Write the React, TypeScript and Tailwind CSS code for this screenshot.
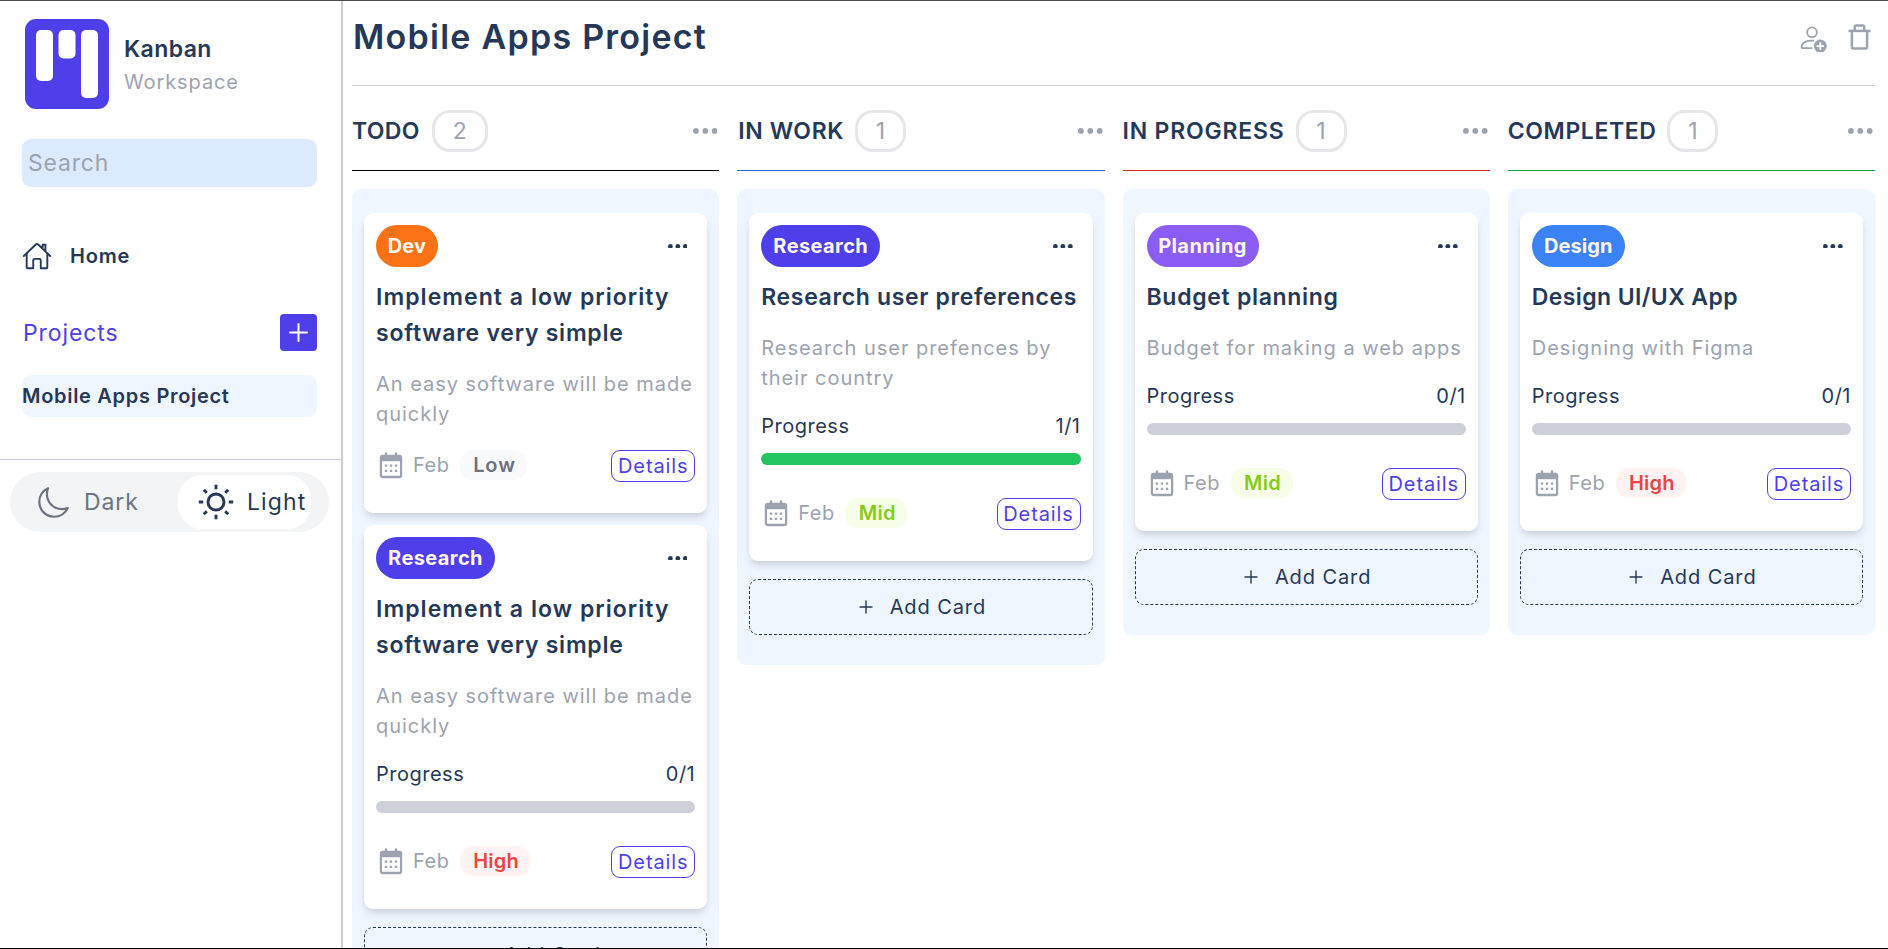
import type { ReactNode } from 'react';
import { IoHomeOutline, IoMoonOutline } from 'react-icons/io5';

type Card = {
  tag: string;
  tagClass: string;
  title: ReactNode;
  titleClass?: string;
  desc: string;
  progress?: string;
  done?: boolean;
  priority: 'Low' | 'Mid' | 'High';
};

type Column = {
  name: string;
  nameClass: string;
  lineClass: string;
  count: number;
  cards: Card[];
};

const dev = 'w-[62px] bg-[#f97316] tracking-[0.2px]';
const research = 'w-[119px] bg-[#4e3feb] tracking-[0.4px]';
const planning = 'w-[112px] bg-[#8b5cf6] tracking-[0.4px]';
const design = 'w-[93px] bg-[#3b82f6] tracking-[0.1px]';

const priorityClass = {
  Low: 'w-[67px] bg-[#f9fafb] text-[#6b7280] tracking-[0.9px]',
  Mid: 'w-[62px] bg-[#f7fee7] text-[#84cc16] tracking-[0.3px]',
  High: 'w-[70px] bg-[#fef2f2] text-[#ef4444] tracking-[0.2px]',
};

const implementTitle = (
  <>
    <span className="tracking-[1.05px]">Implement a low priority</span>{' '}
    <span className="tracking-[0.75px]">software very simple</span>
  </>
);

const columns: Column[] = [
  {
    name: 'TODO',
    nameClass: 'pl-0 pr-px tracking-[0.3px]',
    lineClass: 'border-black',
    count: 2,
    cards: [
      {
        tag: 'Dev',
        tagClass: dev,
        title: implementTitle,
        desc: 'An easy software will be made quickly',
        priority: 'Low',
      },
      {
        tag: 'Research',
        tagClass: research,
        title: implementTitle,
        desc: 'An easy software will be made quickly',
        progress: '0/1',
        priority: 'High',
      },
    ],
  },
  {
    name: 'IN WORK',
    nameClass: 'pl-px tracking-[0.6px]',
    lineClass: 'border-[#2563eb]',
    count: 1,
    cards: [
      {
        tag: 'Research',
        tagClass: research,
        title: 'Research user preferences',
        titleClass: 'tracking-[0.65px]',
        desc: 'Research user prefences by their country',
        progress: '1/1',
        done: true,
        priority: 'Mid',
      },
    ],
  },
  {
    name: 'IN PROGRESS',
    nameClass: 'tracking-[0.8px]',
    lineClass: 'border-[#dc2626]',
    count: 1,
    cards: [
      {
        tag: 'Planning',
        tagClass: planning,
        title: 'Budget planning',
        titleClass: 'tracking-[0.7px]',
        desc: 'Budget for making a web apps',
        progress: '0/1',
        priority: 'Mid',
      },
    ],
  },
  {
    name: 'COMPLETED',
    nameClass: 'tracking-[0.6px]',
    lineClass: 'border-[#16a34a]',
    count: 1,
    cards: [
      {
        tag: 'Design',
        tagClass: design,
        title: 'Design UI/UX App',
        titleClass: 'tracking-[0.4px]',
        desc: 'Designing with Figma',
        progress: '0/1',
        priority: 'High',
      },
    ],
  },
];

function Logo() {
  return (
    <svg width="84" height="90" viewBox="0 0 84 90" className="shrink-0">
      <rect width="84" height="90" rx="11" fill="#4e3feb" />
      <rect x="11" y="11" width="17" height="51" rx="5" fill="#fff" />
      <rect x="33.5" y="11" width="17" height="28.5" rx="5" fill="#fff" />
      <rect x="56" y="11" width="17" height="68" rx="5" fill="#fff" />
    </svg>
  );
}

function Dots({ r, gap, className }: { r: number; gap: number; className: string }) {
  const w = 2 * (gap + r);
  return (
    <svg width={w} height={2 * r} viewBox={`0 0 ${w} ${2 * r}`} fill="currentColor" className={className}>
      <circle cx={r} cy={r} r={r} />
      <circle cx={r + gap} cy={r} r={r} />
      <circle cx={r + 2 * gap} cy={r} r={r} />
    </svg>
  );
}

function Plus({ size, stroke, className }: { size: number; stroke: number; className?: string }) {
  const h = size / 2;
  return (
    <svg width={size} height={size} viewBox={`0 0 ${size} ${size}`} stroke="currentColor" strokeWidth={stroke} strokeLinecap="round" className={className}>
      <path d={`M${h} 1V${size - 1}M1 ${h}H${size - 1}`} />
    </svg>
  );
}

function SunIcon() {
  return (
    <svg width="36" height="36" viewBox="0 0 36 36" fill="none" stroke="currentColor" strokeWidth="2.9">
      <circle cx="18" cy="18" r="8" />
      <path d="M18 .8v4.4M18 30.8v4.4M.8 18h4.4M30.8 18h4.4M5.8 5.8l3 3M27.2 27.2l3 3M5.8 30.2l3-3M27.2 8.8l3-3" />
    </svg>
  );
}

function CalendarIcon() {
  return (
    <svg width="24" height="27" viewBox="0 0 24 27" fill="none" className="shrink-0 text-[#9ca3af]">
      <path d="M7 1.5v3M17 1.5v3" stroke="currentColor" strokeWidth="2.4" strokeLinecap="round" />
      <rect x="1.9" y="4" width="20.2" height="21" rx="1.8" stroke="currentColor" strokeWidth="2.3" />
      <path d="M1.5 4h21v5.2h-21z" fill="currentColor" />
      <path
        d="M5.8 12.500h2.400v2.300H5.800zM10.800 12.500h2.400v2.300h-2.400zM15.800 12.500h2.400v2.300h-2.400zM5.800 17.700h2.400v2.300H5.800zM10.800 17.700h2.400v2.300h-2.400zM15.800 17.700h2.400v2.300h-2.400z"
        fill="currentColor"
      />
    </svg>
  );
}

function AddUserIcon() {
  return (
    <svg width="27" height="27" viewBox="0 0 27 27" fill="none">
      <circle cx="12" cy="7.3" r="4.9" stroke="currentColor" strokeWidth="1.8" />
      <path d="M14 15.700C7.200 15 1.600 17.400 1.600 22.200C1.600 22.900 2 23.200 2.700 23.200H12.400" stroke="currentColor" strokeWidth="1.800" />
      <circle cx="20.300" cy="21.100" r="6.500" fill="currentColor" />
      <path d="M20.300 17.400v7.400M16.600 21.100H24" stroke="#fff" strokeWidth="1.800" />
    </svg>
  );
}

function TrashIcon() {
  return (
    <svg width="23" height="26" viewBox="0 0 23 26" fill="none" stroke="currentColor" strokeWidth="2.500" strokeLinejoin="round">
      <path d="M.5 6.900h22" />
      <path d="M6.800 6.500V3c0-.9.500-1.500 1.400-1.500h6.600c.9 0 1.400.6 1.400 1.500v3.500" />
      <path d="M3.900 7v15.800c0 1 .6 1.600 1.600 1.600h12c1 0 1.600-.6 1.600-1.600V7" />
    </svg>
  );
}

function TaskCard({ card }: { card: Card }) {
  return (
    <article className="rounded-[9px] bg-white px-3 pt-3 pb-[31px] shadow-[0_6px_9px_-1.5px_rgba(0,0,0,0.1),0_3px_6px_-3px_rgba(0,0,0,0.1)]">
      <div className="flex items-center justify-between">
        <span className={`flex h-[42px] items-center justify-center rounded-[24px] text-[20px] font-bold text-[#fff7ed] ${card.tagClass}`}>{card.tag}</span>
        <Dots r={2.35} gap={7.5} className="mr-2" />
      </div>
      <h3 className={`mt-3 -mr-2 text-[23px] leading-9 font-semibold ${card.titleClass ?? ''}`}>{card.title}</h3>
      <p className="mt-[18px] -mr-1 text-[20px] leading-[30px] font-[380] tracking-[0.97px] text-[#9ca3af]">{card.desc}</p>
      {card.progress && (
        <div className="mt-[18px]">
          <div className="flex justify-between text-[20px] leading-[30px] font-[370] tracking-[0.5px]">
            <span>Progress</span>
            <span>{card.progress}</span>
          </div>
          <div className={`mt-3 h-3 rounded-full ${card.done ? 'bg-[#22c55e]' : 'bg-[#cdd0d9]'}`} />
        </div>
      )}
      <div className={`flex items-start justify-between ${card.progress ? 'mt-[33px]' : 'mt-[21px]'}`}>
        <div className="flex h-[30px] items-center text-[20px]">
          <div className="ml-[3px]"><CalendarIcon /></div>
          <span className="ml-2.5 w-[47px] font-[380] tracking-[0.5px] text-[#9ca3af]">Feb</span>
          <span className={`flex h-[30px] items-center justify-center rounded-[13px] pl-0.5 font-semibold ${priorityClass[card.priority]}`}>{card.priority}</span>
        </div>
        <button className="flex h-8 w-[84px] items-center justify-center rounded-[9px] border border-[#4e3feb] text-[20px] font-[380] tracking-[0.9px] text-[#4e3feb]">
          Details
        </button>
      </div>
    </article>
  );
}

export default function App() {
  return (
    <div className="flex h-[949px] overflow-hidden border-t border-b border-t-[#4a4a4c] border-b-black bg-white font-['Inter',sans-serif] text-[#253858]">
      <aside className="w-[343px] shrink-0 border-r-2 border-[#cbd0d8]">
        <div className="flex items-center gap-[15px] pt-[18px] pl-[25px]">
          <Logo />
          <div>
            <h2 className="text-[23px] leading-9 font-semibold tracking-[0.4px]">Kanban</h2>
            <p className="text-[20px] leading-[30px] font-[380] tracking-[0.9px] text-[#9ca3af]">Workspace</p>
          </div>
        </div>
        <div className="pr-6 pl-[22px]">
          <input
            placeholder="Search"
            className="mt-[30px] block h-12 w-full rounded-[9px] bg-[#dbeafe] px-1.5 text-[23px] font-[380] tracking-[0.8px] placeholder:text-[#9ca3af]"
          />
          <div className="mt-[54px] flex h-[30px] items-center">
            <IoHomeOutline size={30} />
            <span className="ml-[18px] text-[20px] font-semibold tracking-[0.8px]">Home</span>
          </div>
          <div className="mt-[42px] flex h-[38px] items-center justify-between">
            <span className="pt-0.5 pl-px text-[23px] font-[370] tracking-[0.9px] text-[#4e3feb]">Projects</span>
            <button className="flex size-[37px] items-center justify-center rounded-[4px] bg-[#4e3feb] text-white">
              <Plus size={19} stroke={2} />
            </button>
          </div>
          <div className="mt-6 flex h-[42px] items-center rounded-[9px] bg-[#eff6ff] text-[20px] font-semibold tracking-[0.7px]">Mobile Apps Project</div>
        </div>
        <div className="mt-[42px] border-t border-[#cbd0d8]" />
        <div className="mt-3 ml-2.5 flex h-[60px] w-[319px] items-center justify-between rounded-full bg-[#f3f4f6] py-[3px] pr-[18px] pl-[26px] text-[23px] font-[370]">
          <div className="flex items-center text-[#6b7280]">
            <IoMoonOutline size={35} />
            <span className="ml-[13px] tracking-[0.9px]">Dark</span>
          </div>
          <div className="flex h-[54px] w-[133px] items-center rounded-[24px] bg-white pl-5">
            <SunIcon />
            <span className="ml-[13px] tracking-[1.1px]">Light</span>
          </div>
        </div>
      </aside>
      <main className="min-w-0 flex-1 pr-[13px] pl-[9px]">
        <header className="flex h-[85px] items-start justify-between border-b border-[#cbd0d8]">
          <h1 className="pt-3 pl-px text-[34px] leading-[48px] font-semibold tracking-[1.25px]">Mobile Apps Project</h1>
          <div className="flex text-[#9ca3af]">
            <div className="mt-6 mr-[21px]"><AddUserIcon /></div>
            <div className="mt-[23px] mr-1"><TrashIcon /></div>
          </div>
        </header>
        <div className="grid grid-cols-4 items-start gap-[18px]">
          {columns.map((col) => (
            <section key={col.name}>
              <div className={`flex h-[85px] items-center border-b pt-1.5 ${col.lineClass}`}>
                <h2 className={`text-[23px] font-semibold whitespace-nowrap ${col.nameClass}`}>{col.name}</h2>
                <span className={`ml-[11px] flex h-[42px] items-center justify-center rounded-[18px] border-3 border-[#e5e7eb] text-[23px] font-[370] text-[#9ca3af] ${col.count > 1 ? 'w-14' : 'w-[51px]'}`}>
                  {col.count}
                </span>
                <Dots r={2.9} gap={9.4} className="mr-0.5 ml-auto text-[#9ca3af]" />
              </div>
              <div className="mt-[18px] rounded-[9px] bg-[#eff6ff] px-3 pt-6 pb-[30px]">
                <div className="flex flex-col gap-3">
                  {col.cards.map((card) => (
                    <TaskCard key={card.tag} card={card} />
                  ))}
                </div>
                <button className="mt-[18px] flex h-14 w-full items-center justify-center rounded-[9px] border border-dashed border-[#253858] pl-[3px] text-[20px] font-[370] tracking-[0.9px]">
                  <Plus size={14} stroke={1.4} className="mr-[17px]" />
                  Add Card
                </button>
              </div>
            </section>
          ))}
        </div>
      </main>
    </div>
  );
}
